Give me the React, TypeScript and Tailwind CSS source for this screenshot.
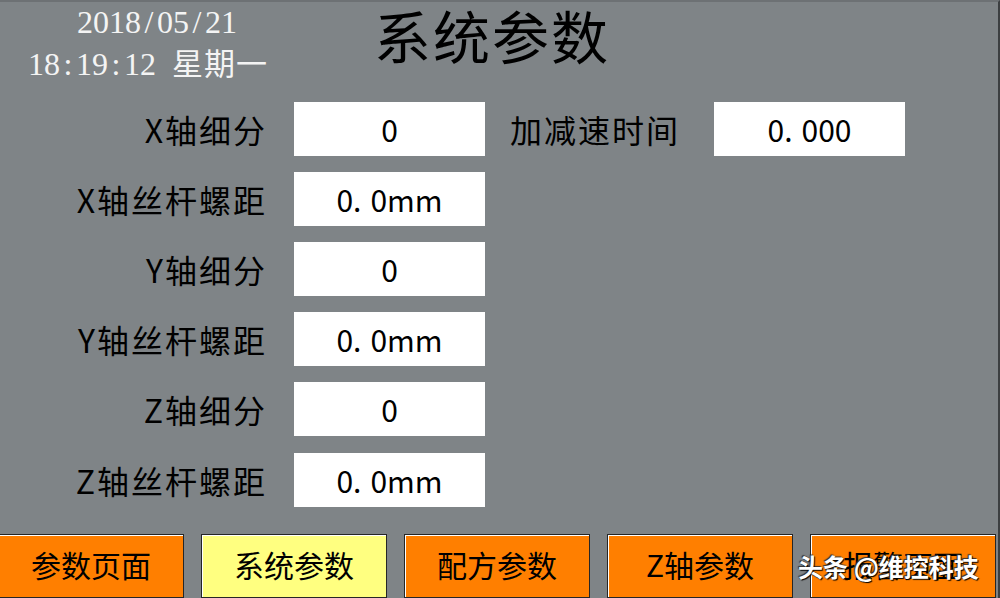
import React from "react";

const cjk = { fontFamily: '"Noto Sans CJK SC", "Noto Sans", sans-serif' };
const serif = { fontFamily: '"Liberation Serif", "Noto Sans CJK SC", serif' };

function Mono({ text }: { text: string }) {
  return (
    <>
      {text.split("").map((c, i) => (
        <span key={i} className="inline-block w-[16px] text-center">
          {c === " " ? "\u00a0" : c}
        </span>
      ))}
    </>
  );
}

function Value({ a, b }: { a: string; b?: string }) {
  return (
    <div className="w-[191px] h-[54px] bg-white flex items-center justify-center text-[30px] text-black leading-none" style={cjk}>
      <span>{a}</span>
      {b !== undefined && (
        <>
          <span className="inline-block w-[9px]" />
          <span>{b}</span>
        </>
      )}
    </div>
  );
}

function Row({ label, a, b }: { label: string; a: string; b?: string }) {
  return (
    <div className="flex items-center h-[54px]">
      <div className="w-[267px] text-right text-[32px] tracking-[2px] text-black leading-none" style={cjk}>
        {label}
      </div>
      <div className="ml-[27px]">
        <Value a={a} b={b} />
      </div>
    </div>
  );
}

function Btn({ label, active }: { label: string; active?: boolean }) {
  return (
    <div
      className={`w-[186px] shrink-0 h-[64px] border border-[#262626] shadow-[inset_1px_1px_0_#ffffff] flex items-start justify-center pt-[14px] text-[30px] text-black leading-none ${
        active ? "bg-[#ffff80]" : "bg-[#ff7f00]"
      }`}
      style={cjk}
    >
      {label}
    </div>
  );
}

export default function App() {
  return (
    <div className="w-[1000px] h-[598px] bg-[#7f8487] relative overflow-hidden flex flex-col border-t-2 border-t-[#6d7174] border-r-2 border-r-[#3c3f41]">
      <div className="h-[100px] flex">
        <div className="w-[374px] pl-[28px] text-[32px] text-[#f4f4f4]" style={serif}>
          <div className="pl-[49px] h-[40px] leading-[40px]">
            <Mono text="2018/05/21" />
          </div>
          <div className="flex items-baseline h-[40px] leading-[40px]">
            <Mono text="18:19:12 " />
            <span className="text-[31px] tracking-[1px]" style={cjk}>星期一</span>
          </div>
        </div>
        <div className="text-[57px] leading-[84px] h-[84px] -mt-[10px] text-black tracking-[2px]" style={cjk}>
          系统参数
        </div>
      </div>

      <div className="flex">
        <div className="flex flex-col gap-[16px]">
          <Row label="X轴细分" a="0" />
          <Row label="X轴丝杆螺距" a="0." b="0mm" />
          <Row label="Y轴细分" a="0" />
          <Row label="Y轴丝杆螺距" a="0." b="0mm" />
          <Row label="Z轴细分" a="0" />
          <div className="mt-[1px]">
            <Row label="Z轴丝杆螺距" a="0." b="0mm" />
          </div>
        </div>
        <div className="flex items-center h-[54px] ml-[25px]">
          <div className="text-[32px] text-black leading-none tracking-[2px]" style={cjk}>
            加减速时间
          </div>
          <div className="ml-[34px]">
            <Value a="0." b="000" />
          </div>
        </div>
      </div>

      <div className="mt-auto flex gap-[17px] ml-[-2px]">
        <Btn label="参数页面" />
        <Btn label="系统参数" active />
        <Btn label="配方参数" />
        <Btn label="Z轴参数" />
        <Btn label="报警页面" />
      </div>

      <div
        className="absolute left-[798px] top-[552px] text-[25px] font-bold text-white leading-none [text-shadow:1px_1px_1px_#000,-1px_-1px_1px_#333]"
        style={cjk}
      >
        头条 @维控科技
      </div>
    </div>
  );
}
